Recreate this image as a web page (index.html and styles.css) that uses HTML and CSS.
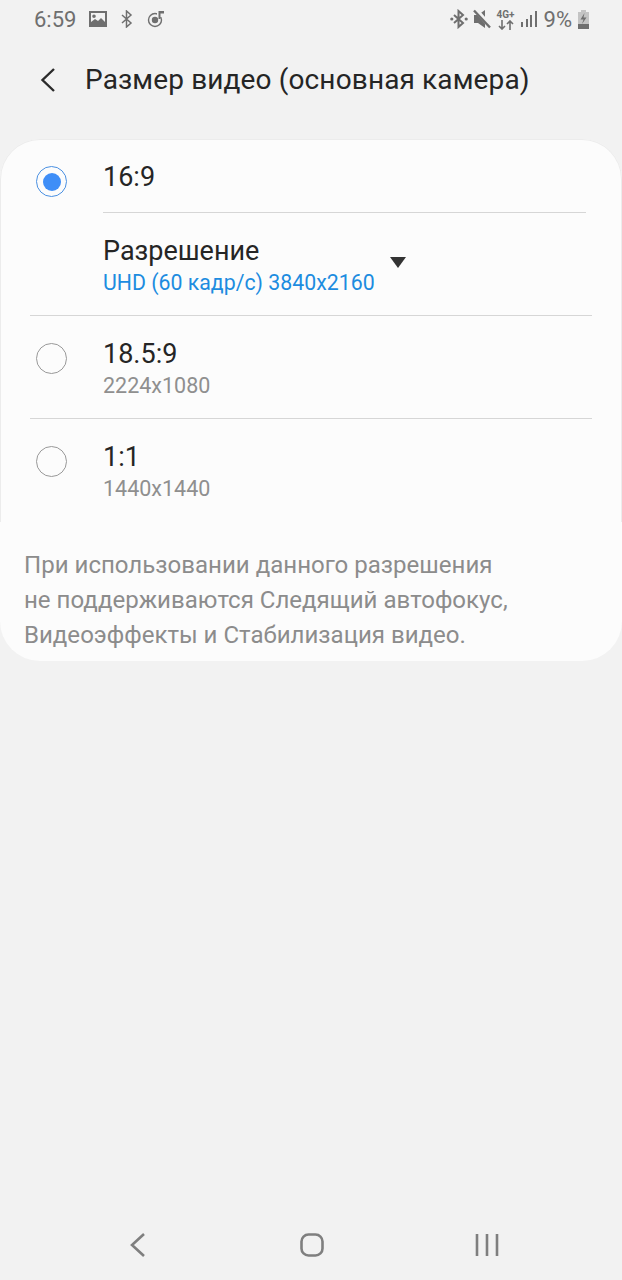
FILE: index.html
```html
<!DOCTYPE html>
<html lang="ru">
<head>
<meta charset="utf-8">
<title>Размер видео</title>
<link rel="stylesheet" href="styles.css">
</head>
<body>
<div class="screen">
  <div class="status">
    <div class="status-left">
      <span class="time">6:59</span>
      <svg class="ic" width="20" height="18" viewBox="0 0 20 18"><path fill="#6f6f6f" fill-rule="evenodd" d="M1 1h18v16H1zM3 3v9l4-3 3 2 3-3 4 4V3zM6 4.500a1.800 1.800 0 1 1 0 3.600 1.800 1.800 0 0 1 0-3.600z"/></svg>
      <svg class="ic bt1" width="12" height="18" viewBox="0 0 12 18"><path fill="none" stroke="#6f6f6f" stroke-width="1.500" d="M1 5l9 8-4.500 4V1L10 5l-9 8"/></svg>
      <svg class="ic music" width="18" height="18" viewBox="0 0 18 18"><circle cx="8" cy="10" r="6.500" fill="none" stroke="#6f6f6f" stroke-width="1.400"/><circle cx="8" cy="10" r="3.200" fill="#6f6f6f"/><path fill="#f2f2f2" d="M10 0h8v7h-8z"/><path fill="#6f6f6f" d="M11.500 1H17v2.500h-3.500V9h-2z"/></svg>
    </div>
    <div class="status-right">
      <svg class="ic" width="18" height="20" viewBox="0 0 18 20"><path fill="none" stroke="#6f6f6f" stroke-width="2" d="M4 6l9 8-4.500 4V2L13 6l-9 8"/><circle cx="1.800" cy="10" r="1.600" fill="#6f6f6f"/><circle cx="16.200" cy="10" r="1.600" fill="#6f6f6f"/></svg>
      <svg class="ic" width="18" height="20" viewBox="0 0 18 20"><path fill="#6f6f6f" d="M1 6h4l7-5v18l-7-5H1z"/><path stroke="#f2f2f2" stroke-width="4.500" d="M3 1l14 16"/><path stroke="#6f6f6f" stroke-width="2.400" d="M1 1.500l16 17"/></svg>
      <div class="net">
        <span class="net-label">4G+</span>
        <svg width="16" height="10" viewBox="0 0 16 10"><path fill="none" stroke="#6f6f6f" stroke-width="1.600" d="M4 0v9M1 6l3 3 3-3M12 10V1M9 4l3-3 3 3"/></svg>
      </div>
      <svg class="ic" width="16" height="18" viewBox="0 0 16 18"><path fill="#6f6f6f" d="M0 12h2v5H0zM5 9h2v8H5zM9 5h2v12H9zM14 1h2v16h-2z"/></svg>
      <span class="pct">9%</span>
      <svg class="ic" width="13" height="19" viewBox="0 0 13 19"><path fill="#c4c4c4" d="M4 0h5v2h3v17H1V2h3z"/><path fill="#6f6f6f" d="M1 14h11v5H1zM7.500 3L3.500 9.500h3L5 14l4.500-6.500h-3z"/></svg>
    </div>
  </div>

  <header class="bar">
    <svg class="back" width="18" height="26" viewBox="0 0 18 26"><path fill="none" stroke="#2b2b2b" stroke-width="2.400" d="M15 2L3.500 13 15 24"/></svg>
    <h1 class="title">Размер видео (основная камера)</h1>
  </header>

  <main class="card">
    <div class="list">
      <section class="option first">
        <span class="radio on"></span>
        <div class="body">
          <div class="name name-top">16:9</div>
          <div class="divider"></div>
          <div class="res">
            <div>
              <div class="name">Разрешение</div>
              <div class="blue">UHD (60 кадр/с) 3840x2160</div>
            </div>
            <span class="caret"></span>
          </div>
        </div>
      </section>
      <div class="rule"></div>
      <section class="option">
        <span class="radio"></span>
        <div class="body">
          <div class="name">18.5:9</div>
          <div class="sub">2224x1080</div>
        </div>
      </section>
      <div class="rule"></div>
      <section class="option">
        <span class="radio"></span>
        <div class="body">
          <div class="name">1:1</div>
          <div class="sub">1440x1440</div>
        </div>
      </section>
    </div>
    <p class="note">При использовании данного разрешения<br>не поддерживаются Следящий автофокус,<br>Видеоэффекты и Стабилизация видео.</p>
  </main>

  <nav class="nav">
    <svg width="18" height="26" viewBox="0 0 18 26"><path fill="none" stroke="#7f7f7f" stroke-width="2.600" d="M15 2L3 13l12 11"/></svg>
    <svg width="26" height="26" viewBox="0 0 26 26"><rect x="2.500" y="2.500" width="21" height="21" rx="7" fill="none" stroke="#7f7f7f" stroke-width="2.600"/></svg>
    <svg width="26" height="26" viewBox="0 0 26 26"><path stroke="#7f7f7f" stroke-width="2.600" d="M3 2v22M13 2v22M23 2v22"/></svg>
  </nav>
</div>
</body>
</html>
```

FILE: styles.css
```css
* { box-sizing: border-box; }
html, body { margin: 0; padding: 0; }
body { background: #f2f2f2; font-family: Roboto, "Liberation Sans", sans-serif; }
.screen { width: 622px; height: 1280px; display: flex; flex-direction: column; background: #f2f2f2; overflow: hidden; }

.status { height: 38px; display: flex; justify-content: space-between; align-items: center; padding: 0 32px 0 34px; color: #6f6f6f; }
.status-left, .status-right { display: flex; align-items: center; }
.ic { display: block; flex: none; }
.time { font-size: 22px; margin-right: 12px; }
.bt1 { margin: 0 14px 0 13px; }
.status-right { gap: 5px; }
.net { display: flex; flex-direction: column; align-items: center; width: 20px; }
.net-label { font-size: 10px; font-weight: 700; line-height: 11px; }
.pct { font-size: 22px; margin-left: 2px; }

.bar { height: 101px; display: flex; align-items: center; padding: 0 0 18px 39px; }
.back { flex: none; margin-right: 28px; }
.title { margin: 0; font-size: 28px; font-weight: 400; letter-spacing: 0.13px; color: #252525; white-space: nowrap; }

.card { height: 522px; background: #fcfcfc; border-radius: 40px; }
.list { height: 383px; border: 1px solid #ececec; border-bottom: 0; border-radius: 40px 40px 0 0; }
.option { display: flex; padding-left: 35px; }
.radio { flex: none; width: 31px; height: 31px; border-radius: 50%; border: 1.500px solid #999; margin-top: 27px; margin-right: 36px; position: relative; }
.radio.on { border-color: #4a90e2; margin-top: 26px; }
.radio.on::after { content: ""; position: absolute; inset: 5.500px; border-radius: 50%; background: #3f8ef7; }
.body { flex: 1; padding-top: 21px; padding-bottom: 18px; }
.first .body { padding-top: 0; padding-bottom: 18px; }
.name { font-size: 27px; line-height: 34px; color: #252525; }
.name-top { padding-top: 20px; height: 72px; }
.divider { height: 1px; background: #d6d6d6; margin-right: 35px; }
.res { display: flex; align-items: center; gap: 15px; padding-top: 21px; }
.blue { font-size: 21.300px; line-height: 28px; color: #1d8ce0; margin-top: 1px; }
.caret { width: 0; height: 0; border-left: 8px solid transparent; border-right: 8px solid transparent; border-top: 11px solid #333; margin-top: -6px; }
.sub { font-size: 21.500px; line-height: 28px; color: #8f8f8f; margin-top: 1px; }
.rule { height: 1px; background: #d6d6d6; margin: 0 29px; }
.note { margin: 0; padding: 26px 0 0 24px; font-size: 24.050px; line-height: 35px; color: #8c8c8c; }

.nav { margin-top: auto; height: 48px; display: flex; align-items: flex-start; padding: 0 0 0 129px; }
.nav svg { flex: none; }
.nav svg:nth-child(2) { margin-left: 152px; }
.nav svg:nth-child(3) { margin-left: 149px; }
```
